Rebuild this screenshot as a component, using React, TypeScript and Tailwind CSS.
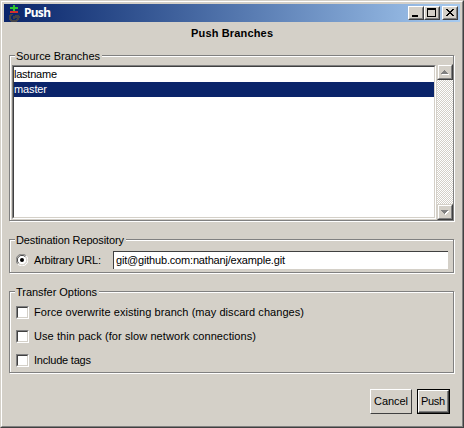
import React from "react";

const sunken = "border border-t-[#808080] border-l-[#808080] border-r-white border-b-white";
const sunkenInner = "border border-t-[#404040] border-l-[#404040] border-r-[#d4d0c8] border-b-[#d4d0c8]";
const raised = "border border-t-white border-l-white border-r-[#404040] border-b-[#404040]";
const raisedInner = "border border-t-[#d4d0c8] border-l-[#d4d0c8] border-r-[#808080] border-b-[#808080]";

function TitleButton({ label, children }: { label: string; children: React.ReactNode }) {
  return (
    <button aria-label={label} className={`h-[14px] w-[16px] bg-[#d4d0c8] ${raised}`}>
      <span className={`flex h-full w-full ${raisedInner}`}>
        <svg width="12" height="10" viewBox="0 0 12 10" shapeRendering="crispEdges" className="block shrink-0">
          {children}
        </svg>
      </span>
    </button>
  );
}

function T({ w, children, bold, size }: { w: number; children: string; bold?: boolean; size?: string }) {
  return (
    <svg
      width={w + 2}
      height="15"
      className={`block shrink-0 overflow-visible ${size ?? "text-[11px]"} ${bold ? "font-bold" : ""}`}
      fill="currentColor"
    >
      <text x="0" y="11" textLength={w} lengthAdjust="spacing">
        {children}
      </text>
    </svg>
  );
}

function Group({ title, titleWidth, className, children }: { title: string; titleWidth: number; className: string; children: React.ReactNode }) {
  return (
    <section
      className={`ml-[9px] w-[445px] border border-[#808080] shadow-[inset_1px_1px_0_#fff,1px_1px_0_#fff] ${className}`}
    >
      <h2 className="-mt-[7px] ml-[5px] flex h-[15px] w-fit bg-[#d4d0c8] pl-px">
        <T w={titleWidth}>{title}</T>
      </h2>
      {children}
    </section>
  );
}

function Check({ label, w }: { label: string; w: number }) {
  return (
    <label className="flex h-6 items-center">
      <span className={`h-[13px] w-[13px] ${sunken}`}>
        <span className={`block h-full w-full bg-white ${sunkenInner}`} />
      </span>
      <span className="ml-[5px]">
        <T w={w}>{label}</T>
      </span>
    </label>
  );
}

function ScrollButton({ down }: { down?: boolean }) {
  return (
    <button aria-label={down ? "Scroll down" : "Scroll up"} className="h-4 w-4 border border-t-[#d4d0c8] border-l-[#d4d0c8] border-r-[#404040] border-b-[#404040] bg-[#d4d0c8]">
      <span className="flex h-full w-full border border-t-white border-l-white border-r-[#808080] border-b-[#808080]">
        <svg width="12" height="12" viewBox="0 0 12 12" shapeRendering="crispEdges" className="block shrink-0">
          {down ? (
            <>
              <path d="M3 5h7v1h-1v1h-1v1h-1v1h-1v-1h-1v-1h-1v-1h-1z" fill="#fff" />
              <path d="M2 4h7v1h-1v1h-1v1h-1v1h-1v-1h-1v-1h-1v-1h-1z" fill="#808080" />
            </>
          ) : (
            <>
              <path d="M3 8h7v1h-7z" fill="#fff" />
              <path d="M5 4h1v1h1v1h1v1h1v1h-7v-1h1v-1h1v-1h1z" fill="#808080" />
            </>
          )}
        </svg>
      </span>
    </button>
  );
}

export default function App() {
  return (
    <main className="h-[428px] w-[464px] border border-t-[#d4d0c8] border-l-[#d4d0c8] border-r-[#404040] border-b-[#404040] bg-[#d4d0c8] font-['Liberation_Sans',Arial,sans-serif] text-[11px] text-black">
      <div className="flex h-full w-full flex-col border border-t-white border-l-white border-r-[#808080] border-b-[#808080]">
        <header className="mt-[2px] ml-[2px] flex h-[18px] w-[456px] shrink-0 items-center bg-linear-to-r from-[#0a246a] to-[#a6caf0] pr-[2px]">
          <svg width="16" height="18" viewBox="0 0 16 18" shapeRendering="crispEdges" className="ml-[2px] shrink-0">
            <path d="M7 1h2v2h3v2h-3v2h-2v-2h-3v-2h3z" fill="#2fc52f" />
            <path d="M4 7h8v2h-8z" fill="#d32f2f" />
            <path d="M4 10h3v1h-1v1h-1v3h1v1h4v-1h1v-1h-2v1h-2v-3h2v-1h4v1h1v2h-1v2h-1v1h-1v1h-6v-1h-1v-1h-1v-5h1z" fill="#444448" />
          </svg>
          <h1 className="ml-[2px] font-['Noto_Sans','Open_Sans',sans-serif] text-white">
            <T w={27} bold size="text-[12px]">Push</T>
          </h1>
          <div className="ml-auto flex">
            <TitleButton label="Minimize">
              <path d="M2 7h6v2h-6z" />
            </TitleButton>
            <TitleButton label="Maximize">
              <path fillRule="evenodd" d="M1 0h9v9h-9zM2 2v6h7v-6z" />
            </TitleButton>
            <span className="w-[2px]" />
            <TitleButton label="Close">
              <path d="M2 1h2v1h1v1h2v-1h1v-1h2v1h-1v1h-1v1h-1v1h1v1h1v1h1v1h-2v-1h-1v-1h-2v1h-1v1h-2v-1h1v-1h1v-1h1v-1h-1v-1h-1v-1h-1z" />
            </TitleButton>
          </div>
        </header>

        <h2 className="mt-[4px] flex h-[15px] shrink-0 justify-center pl-[2px]">
          <T w={82} bold size="text-[11px]">Push Branches</T>
        </h2>

        <div className="mt-[14px] -ml-[2px] flex flex-col">
          <Group title="Source Branches" titleWidth={84} className="h-[166px]">
            <div className="mt-px ml-[2px] flex">
              <div className={`h-[154px] w-[424px] ${sunken}`}>
                <ul className={`h-full w-full bg-white ${sunkenInner}`}>
                  <li className="h-[15px]"><T w={43}>lastname</T></li>
                  <li className="h-[15px] bg-[#0a246a] text-white"><T w={33}>master</T></li>
                </ul>
              </div>
              <div className="-mt-px ml-px flex h-[156px] w-4 flex-col justify-between bg-[repeating-conic-gradient(#fff_0_25%,#d4d0c8_0_50%)] bg-size-[2px_2px]">
                <ScrollButton />
                <ScrollButton down />
              </div>
            </div>
          </Group>

          <Group title="Destination Repository" titleWidth={108} className="mt-[18px] h-[34px]">
            <div className="mt-[3px] ml-[6px] flex items-center">
              <svg width="12" height="12" viewBox="0 0 12 12" className="shrink-0">
                <circle cx="6" cy="6" r="5" fill="#fff" />
                <path d="M1.8 10.2A5.5 5.5 0 0 1 10.2 1.8" fill="none" stroke="#808080" />
                <path d="M2.7 9.3A4.5 4.5 0 0 1 9.3 2.7" fill="none" stroke="#404040" />
                <path d="M10.2 1.8A5.5 5.5 0 0 1 1.8 10.2" fill="none" stroke="#fff" />
                <path d="M9.3 2.7A4.5 4.5 0 0 1 2.7 9.3" fill="none" stroke="#d4d0c8" />
                <circle cx="6" cy="6" r="2" />
              </svg>
              <span className="ml-[6px]"><T w={67}>Arbitrary URL:</T></span>
              <div className="ml-[10px] flex h-[18px] w-[335px] border-t border-l border-[#404040] bg-white pl-[2px] pt-px">
                <T w={169}>git@github.com:nathanj/example.git</T>
              </div>
            </div>
          </Group>

          <Group title="Transfer Options" titleWidth={81} className="mt-[18px] h-[82px]">
            <div className="ml-[6px]">
              <Check label="Force overwrite existing branch (may discard changes)" w={270} />
              <Check label="Use thin pack (for slow network connections)" w={222} />
              <Check label="Include tags" w={57} />
            </div>
          </Group>
        </div>

        <footer className="mt-[16px] flex h-[25px] shrink-0 justify-end pr-[12px]">
          <button className={`flex h-[25px] w-[42px] items-center bg-[#d4d0c8] pl-[3px] ${raised}`}>
            <T w={34}>Cancel</T>
          </button>
          <button className="ml-[5px] h-[25px] w-[33px] border border-black">
            <span className={`flex h-full w-full bg-[#d4d0c8] ${raised}`}>
              <span className="flex h-full w-full items-center border-r border-b border-[#808080] pl-[2px]">
                <T w={24}>Push</T>
              </span>
            </span>
          </button>
        </footer>
      </div>
    </main>
  );
}
